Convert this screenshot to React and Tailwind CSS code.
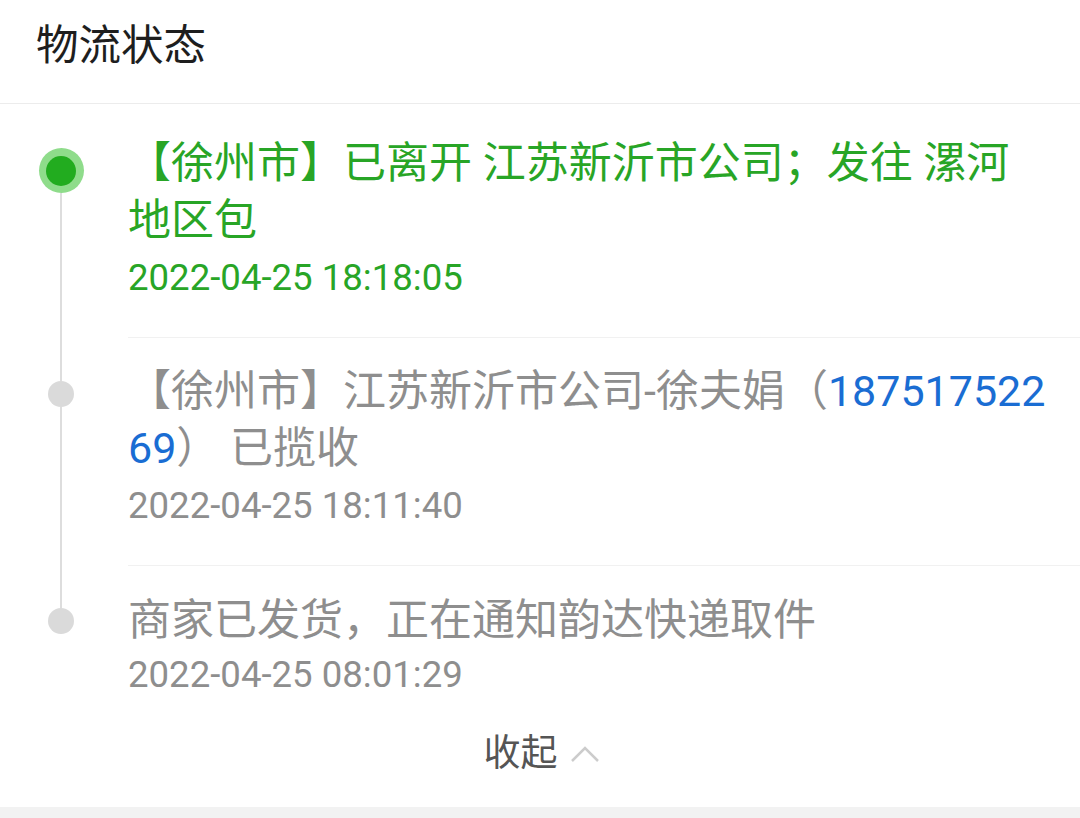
import React from "react";

const font = { fontFamily: 'Roboto, "Noto Sans CJK SC", sans-serif' };

const traces = [
  {
    id: 1,
    active: true,
    text: <>【徐州市】已离开 江苏新沂市公司；发往 漯河地区包</>,
    time: "2022-04-25 18:18:05",
  },
  {
    id: 2,
    text: (
      <>
        【徐州市】江苏新沂市公司-徐夫娟（
        <span className="text-[#1a6dd3]">18751752269</span>） 已揽收
      </>
    ),
    time: "2022-04-25 18:11:40",
  },
  {
    id: 3,
    text: <>商家已发货，正在通知韵达快递取件</>,
    time: "2022-04-25 08:01:29",
  },
];

const TraceRow = ({ item, first, last }) => {
  return (
    <div className="flex">
      <div className="w-[122px] flex flex-col items-center shrink-0">
        {item.active ? (
          <>
            <div className="h-[44px] w-[2px]" />
            <div className="w-[45px] h-[45px] rounded-full bg-[#8fdc8b] flex items-center justify-center">
              <div className="w-[30px] h-[30px] rounded-full bg-[#22ac1f]" />
            </div>
          </>
        ) : (
          <>
            <div className={`w-[2px] ${first ? "" : "bg-[#dddddd]"} ${item.id === 3 ? "h-[42px]" : "h-[43px]"}`} />
            <div className="w-[26px] h-[26px] rounded-full bg-[#dadada]" />
          </>
        )}
        <div className={`w-[2px] flex-1 ${last ? "" : "bg-[#dddddd]"}`} />
      </div>
      <div
        className={`flex-1 ml-[6px] pr-[30px] border-b border-[#f1f1f1] ${
          item.active ? "pt-[31px] pb-[31px]" : item.id === 3 ? "pt-[26px] pb-0 border-b-0" : "pt-[25px] pb-[31px]"
        }`}
      >
        <p
          className={`text-[43px] leading-[57px] break-all ${
            item.active ? "text-[#28a526]" : "text-[#8e8e8e]"
          }`}
        >
          {item.text}
        </p>
        <p
          className={`text-[36.6px] ${
            item.active ? "text-[#28a526]" : "text-[#8e8e8e]"
          } ${item.id === 3 ? "leading-[52px]" : "leading-[57px]"}`}
        >
          {item.time}
        </p>
      </div>
    </div>
  );
};

const App = () => {
  return (
    <div className="min-h-screen bg-[#f2f2f2]" style={font}>
      <div className="bg-white">
        <div className="h-[104px] px-[36px] pt-[18px] border-b border-[#ececec]">
          <h1 className="text-[42.5px] leading-[56px] text-[#1e1e1e]">物流状态</h1>
        </div>
        <div className="flex flex-col">
          {traces.map((item, index) => (
            <TraceRow
              key={item.id}
              item={item}
              first={index === 0}
              last={index === traces.length - 1}
            />
          ))}
        </div>
        <div className="h-[106px] flex items-center justify-center gap-[12px] pl-[3px]">
          <span className="text-[37px] text-[#555555]">收起</span>
          <svg width="30" height="18" viewBox="0 0 30 18" fill="none">
            <polyline points="2,16 15,3 28,16" stroke="#cccccc" strokeWidth="2.5" />
          </svg>
        </div>
      </div>
    </div>
  );
};

export default App;
